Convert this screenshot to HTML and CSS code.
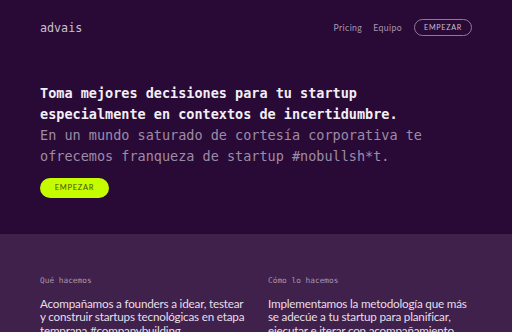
FILE: index.html
```html
<!DOCTYPE html>
<html lang="es">

<head>
    <meta charset="UTF-8">
    <meta name="viewport" content="width=device-width, initial-scale=1.0">
    <title>advais</title>
    <link rel="stylesheet" href="styles.css">
</head>

<body>

    <!-- Hero -->
    <section class="hero">
        <header class="topbar">
            <div class="logo">advais</div>
            <nav class="nav">
                <a href="#">Pricing</a>
                <a href="#">Equipo</a>
                <a href="#" class="btn-outline">EMPEZAR</a>
            </nav>
        </header>

        <div class="hero-text">
            <h1>Toma mejores decisiones para tu startup<br>especialmente en contextos de incertidumbre.</h1>
            <p>En un mundo saturado de cortesía corporativa te<br>ofrecemos franqueza de startup #nobullsh*t.</p>
        </div>

        <a href="#" class="btn-lime">EMPEZAR</a>
    </section>

    <!-- What / how -->
    <section class="about">
        <div class="col">
            <h3>Qué hacemos</h3>
            <p>Acompañamos a founders a idear, testear y construir startups tecnológicas en etapa temprana #companybuilding.</p>
        </div>
        <div class="col">
            <h3>Cómo lo hacemos</h3>
            <p>Implementamos la metodología que más se adecúe a tu startup para planificar, ejecutar e iterar con acompañamiento constante.</p>
        </div>
    </section>

</body>

</html>
```

FILE: styles.css
```css
body {
    margin: 0;
    padding: 0;
    font-family: "Lato", "Noto Sans", sans-serif;
    background-color: #40214b;
    overflow: hidden;
}

a {
    text-decoration: none;
}

.hero {
    background-color: #290a36;
    padding: 0 40px 36px;
}

.topbar {
    display: flex;
    align-items: center;
    justify-content: space-between;
    height: 55px;
}

.logo {
    font-family: "DejaVu Sans Mono", monospace;
    font-size: 11.7px;
    color: #c9c1cd;
}

.nav {
    display: flex;
    align-items: center;
    gap: 11px;
}

.nav a {
    color: #a795b0;
    font-size: 8.7px;
    letter-spacing: 0.4px;
}

.nav .btn-outline {
    color: #c9bfd0;
    font-size: 7.2px;
    letter-spacing: 0.7px;
    border: 1px solid #8f7a9b;
    border-radius: 9px;
    padding: 3px 9px;
    margin-left: 1px;
}

.hero-text {
    margin-top: 28px;
    font-family: "DejaVu Sans Mono", monospace;
    font-size: 13.5px;
    line-height: 21px;
}

.hero-text h1 {
    margin: 0;
    font-size: inherit;
    font-weight: bold;
    color: #f3eef5;
}

.hero-text p {
    margin: 0;
    color: #9d8ca6;
}

.btn-lime {
    display: inline-block;
    margin-top: 11px;
    width: 69px;
    height: 20px;
    line-height: 20px;
    text-align: center;
    border-radius: 10px;
    background-color: #c6fc00;
    color: #435206;
    font-size: 7.5px;
    letter-spacing: 0.7px;
}

.about {
    display: grid;
    grid-template-columns: 206px 204px;
    gap: 22px;
    padding: 42px 40px 0;
}

.col h3 {
    margin: 0 0 12px;
    font-family: "DejaVu Sans Mono", monospace;
    font-size: 7.8px;
    font-weight: normal;
    color: #a898b0;
}

.col p {
    margin: 0;
    font-size: 11.7px;
    line-height: 13.4px;
    letter-spacing: -0.2px;
    color: #e6dfe9;
}
```
